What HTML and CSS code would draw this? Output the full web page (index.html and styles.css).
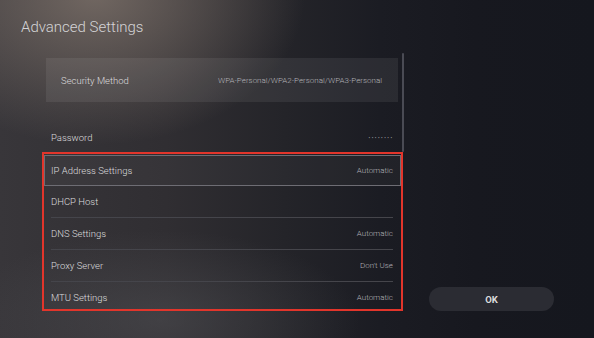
FILE: index.html
```html
<!DOCTYPE html>
<html>
<head>
<meta charset="utf-8">
<link rel="stylesheet" href="styles.css">
</head>
<body>
<div class="screen">
  <h1 class="title">Advanced Settings</h1>
  <div class="main">
    <div class="panel">
      <div class="scrollbar"></div>
      <div class="security">
        <span class="label">Security Method</span>
        <span class="value">WPA-Personal/WPA2-Personal/WPA3-Personal</span>
      </div>
      <div class="password">
        <span class="label">Password</span>
        <span class="value dots">••••••••</span>
      </div>
      <div class="list">
        <div class="row focused"><span class="label">IP Address Settings</span><span class="value">Automatic</span></div>
        <div class="row"><span class="label">DHCP Host</span><span class="value"></span></div>
        <div class="row"><span class="label">DNS Settings</span><span class="value">Automatic</span></div>
        <div class="row"><span class="label">Proxy Server</span><span class="value">Don't Use</span></div>
        <div class="row last"><span class="label">MTU Settings</span><span class="value">Automatic</span></div>
      </div>
    </div>
    <div class="side">
      <button class="ok">OK</button>
    </div>
  </div>
</div>
</body>
</html>
```
FILE: styles.css
```css
* { box-sizing: border-box; }
html, body { margin: 0; padding: 0; }
body { width: 594px; height: 338px; overflow: hidden; font-family: Roboto, "Liberation Sans", sans-serif; }
.screen {
  position: relative;
  width: 594px;
  height: 338px;
  overflow: hidden;
  background:
    radial-gradient(ellipse 210px 150px at 95px -5px, rgba(128,116,108,0.8), rgba(128,116,108,0) 100%),
    radial-gradient(ellipse 200px 90px at 160px 320px, rgba(82,82,86,0.5), rgba(82,82,86,0) 100%),
    linear-gradient(90deg, #38363a 0%, #302e32 28%, #242429 48%, #1b1c23 64%, #17181f 80%, #15171e 100%);
}
.title {
  margin: 0;
  padding: 17px 0 0 21px;
  font-size: 15px;
  line-height: 20px;
  font-weight: 300;
  color: #d4d4d6;
}
.main {
  display: flex;
  padding-top: 21px;
}
.panel {
  position: relative;
  margin-left: 42px;
  width: 361px;
}
.scrollbar {
  position: absolute;
  left: 360px;
  top: -5px;
  width: 2px;
  height: 99px;
  background: #4a4b54;
  border-radius: 1px;
}
.label { font-size: 9.5px; font-weight: 300; color: #dcdcde; }
.value { font-size: 8px; font-weight: 300; color: #b4b4b8; }
.security {
  margin-left: 4px;
  width: 352px;
  height: 44px;
  display: flex;
  align-items: center;
  justify-content: space-between;
  padding: 0 16px 0 15px;
  background: rgba(255,255,255,0.07);
}
.password {
  margin-top: 21px;
  height: 29px;
  display: flex;
  align-items: center;
  justify-content: space-between;
  padding: 0 11px 0 9px;
}
.dots { font-size: 5px; letter-spacing: 1.5px; margin-right: -1.5px; color: #a0a0a4; }
.list {
  height: 159px;
  border: 2px solid #e2352b;
  overflow: hidden;
}
.row {
  height: 32px;
  margin: 0 8px 0 7px;
  display: flex;
  align-items: center;
  justify-content: space-between;
  border-bottom: 1px solid #45454b;
}
.row.focused {
  margin: 1px 0 0 0;
  height: 31px;
  padding: 0 7px 0 6px;
  border: 1px solid #6e6d74;
  background: rgba(255,255,255,0.03);
}
.row.last { border-bottom: none; height: 31px; }
.side {
  flex: 1;
  display: flex;
  align-items: flex-end;
  padding-left: 26px;
}
.ok {
  width: 125px;
  height: 24px;
  margin-bottom: 0;
  border: none;
  border-radius: 12px;
  background: #2b2c33;
  color: #dcdcde;
  font-family: Roboto, "Liberation Sans", sans-serif;
  font-weight: 700;
  font-size: 9.5px;
  padding: 0;
}
```
